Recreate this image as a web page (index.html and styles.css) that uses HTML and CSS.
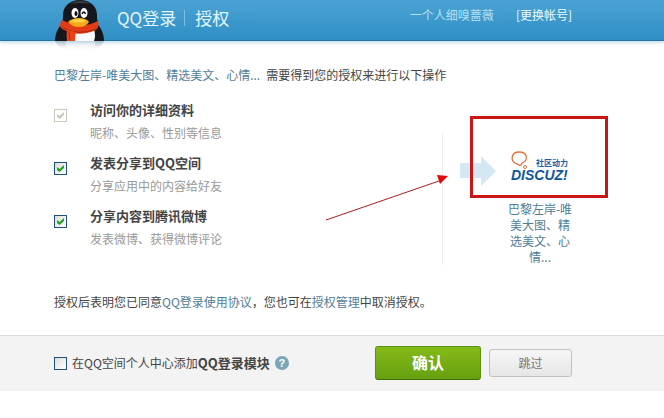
FILE: index.html
```html
<!DOCTYPE html>
<html lang="zh-CN">
<head>
    <meta charset="UTF-8">
    <meta name="viewport" content="width=device-width, initial-scale=1.0">
    <title>QQ登录 | 授权</title>
    <link rel="stylesheet" href="styles.css">
</head>
<body>
    <header class="header">
        <svg class="penguin" viewBox="0 0 52 51" aria-hidden="true">
            <defs>
                <linearGradient id="fade" x1="0" y1="0" x2="0" y2="1">
                    <stop offset="0" stop-color="#7d8b93" stop-opacity=".45"/>
                    <stop offset="1" stop-color="#7d8b93" stop-opacity="0"/>
                </linearGradient>
            </defs>
            <!-- reflection -->
            <path d="M1 41h11v8q-8-1-11-8zM41 41h9q-2 6-9 8z" fill="url(#fade)"/>
            <path d="M12 41h29v9h-29z" fill="url(#fade)" opacity=".35"/>
            <!-- body -->
            <path d="M9 23C4 27 1 34 1 41h49c0-7-3-14-8-18z" fill="#15171c"/>
            <path d="M26 0C15 0 9 7 9 15c0 3 0 5-1 7 3 6 34 6 36 0-1-2-1-4-1-7C43 7 37 0 26 0z" fill="#15171c"/>
            <path d="M16 4Q20 1 27 1q6 0 9 3-9-2-20 0z" fill="#3b3e46"/>
            <path d="M20 31q10 3 20-2 2 7 0 12H20q-1-6 0-10z" fill="#f8fafb"/>
            <!-- eyes -->
            <ellipse cx="21" cy="13" rx="3.5" ry="5" fill="#fff"/>
            <ellipse cx="30" cy="13" rx="3.5" ry="5" fill="#fff"/>
            <ellipse cx="22" cy="13.5" rx="1.5" ry="2.5" fill="#111"/>
            <path d="M28 14q2-4 3.5 0" fill="none" stroke="#111" stroke-width="1.5"/>
            <!-- scarf -->
            <path d="M8 20q-4 5 0 9 16 9 34 1 4-5 2-9-17 9-36-1z" fill="#e23c16"/>
            <path d="M9 28q15 8 33 1" fill="none" stroke="#a92610" stroke-width="1"/>
            <path d="M13 30l9 2q-1 5-1 9h-8q-1-6 0-11z" fill="#e9431a"/>
            <path d="M15 32l1 8" stroke="#b92d10" stroke-width="1"/>
            <!-- beak -->
            <path d="M14 22q4-4 11-4 7 0 10 4-3 5-10 5-7 0-11-5z" fill="#f5a81c"/>
            <path d="M17 21q9-4 15 0-7 3-15 0z" fill="#ffd34a"/>
        </svg>
        <h1 class="title"><span>QQ登录</span><span class="title-sub">授权</span></h1>
        <div class="account">
            <span>一个人细嗅蔷薇</span>
            <a class="switch" href="#">[更换帐号]</a>
        </div>
    </header>

    <form>
        <main class="main">
            <p class="intro"><a href="#">巴黎左岸-唯美大图、精选美文、心情...</a><span>需要得到您的授权来进行以下操作</span></p>

            <div class="content">
                <ul class="scopes">
                    <li class="scope">
                        <input class="check" type="checkbox" id="info" checked disabled>
                        <label for="info"><b>访问你的详细资料</b><span>昵称、头像、性别等信息</span></label>
                    </li>
                    <li class="scope">
                        <input class="check" type="checkbox" id="qzone" checked>
                        <label for="qzone"><b>发表分享到QQ空间</b><span>分享应用中的内容给好友</span></label>
                    </li>
                    <li class="scope">
                        <input class="check" type="checkbox" id="weibo" checked>
                        <label for="weibo"><b>分享内容到腾讯微博</b><span>发表微博、获得微博评论</span></label>
                    </li>
                </ul>

                <div class="target">
                    <svg class="arrow" viewBox="0 0 36 30" aria-hidden="true">
                        <path d="M0 7h21V0l15 15-15 15v-8H0z" fill="#d3e7f5"/>
                    </svg>
                    <div class="app">
                        <svg class="app-logo" viewBox="0 0 66 34" role="img" aria-label="Discuz!">
                            <path d="M9 12.5C3 10 4 1 12 1c9 0 9 8 4 10.500-2 1-1 3-3 3-2 0-2-1.500-4-2z" fill="none" stroke="#e0733a" stroke-width="1.300"/>
                            <circle cx="18" cy="16" r="1.500" fill="none" stroke="#e0733a"/>
                            <text class="logo-cn" x="29" y="15">社区动力</text>
                            <text class="logo-en" x="4" y="29">DISCUZ!</text>
                        </svg>
                        <a class="app-name" href="#">巴黎左岸-唯美大图、精选美文、心情...</a>
                    </div>
                    <div class="mark"></div>
                    <svg class="pointer" viewBox="0 0 124 48" aria-hidden="true">
                        <path d="M1 46L114 7" stroke="#a81c1c" stroke-width="1"/>
                        <path d="M112 1l11 1-8 8z" fill="#e00b0b"/>
                    </svg>
                </div>
            </div>

            <p class="note">授权后表明您已同意<a href="#">QQ登录使用协议</a>，您也可在<a href="#">授权管理</a>中取消授权。</p>
        </main>

        <footer class="footer">
            <div class="module">
                <input class="check" type="checkbox" id="module">
                <label for="module">在QQ空间个人中心添加<b>QQ登录模块</b></label>
                <a class="help" href="#" aria-label="帮助">?</a>
            </div>
            <div class="buttons">
                <button class="btn btn-ok" type="submit">确认</button>
                <button class="btn btn-skip" type="button">跳过</button>
            </div>
        </footer>
    </form>
</body>
</html>
```
FILE: styles.css
```css
* {
    box-sizing: border-box;
}
body {
    margin: 0;
    background: #fff;
    color: #444;
    font: 12px/18px "Noto Sans CJK SC", sans-serif;
}
a {
    color: #4f7d99;
    text-decoration: none;
}
p, ul {
    margin: 0;
    padding: 0;
    list-style: none;
}

/* header */
.header {
    display: flex;
    height: 41px;
    padding: 0 92px 0 54px;
    background: linear-gradient(#4ba3d3, #2f8fc5);
    border-bottom: 1px solid #2474a3;
    box-shadow: 0 2px 3px #c4e3f1;
}
.penguin {
    width: 52px;
    height: 51px;
    flex: none;
}
.title {
    display: flex;
    align-items: center;
    height: 36px;
    margin: 0 auto 0 11px;
    color: #e4f5fd;
    font-size: 17px;
    font-weight: normal;
    line-height: 16px;
}
.title-sub {
    margin-left: 8px;
    padding-left: 10px;
    border-left: 1px solid #7fc0e2;
}
.account {
    display: flex;
    gap: 22px;
    padding-top: 6px;
    color: #b5e0f5;
}
.switch {
    color: #eefaff;
}

/* main */
.main {
    padding: 25px 54px 24px;
}
.intro {
    display: flex;
    flex-wrap: wrap;
    gap: 6px;
}
.content {
    display: grid;
    grid-template-columns: 388px 1fr;
    margin: 16px 0 28px;
}
.scopes {
    display: grid;
    gap: 7px;
    align-content: start;
}
.scope {
    display: flex;
    align-items: flex-start;
    gap: 23px;
}
.scope .check {
    margin-top: 9px;
}
.scope b,
.scope span {
    display: block;
    line-height: 20px;
}
.scope span {
    color: #999;
    line-height: 26px;
}
b {
    font-size: 13px;
}
.check {
    appearance: none;
    flex: none;
    width: 13px;
    height: 13px;
    margin: 0;
    border: 1px solid #1f5080;
    background: linear-gradient(135deg, #dcdcd7, #fff);
}
.check:checked::before {
    content: "";
    display: block;
    width: 7px;
    height: 7px;
    margin: 2px;
    background: #21a121;
    clip-path: polygon(0 29%, 0 71%, 36% 100%, 100% 43%, 100% 0, 36% 57%);
}
.check:disabled {
    border-color: #cac8bb;
    background: #fff;
}
.check:disabled::before {
    background: #cac8bb;
}

.target {
    position: relative;
    display: flex;
    align-items: flex-start;
    gap: 11px;
    margin-top: 33px;
    padding: 18px 0 0 17px;
    border-left: 1px solid #eee;
}
.arrow {
    width: 36px;
    height: 30px;
    margin-top: 5px;
}
.app {
    width: 66px;
    text-align: center;
}
.app-logo {
    display: block;
    width: 66px;
    height: 34px;
    margin-bottom: 16px;
}
.logo-cn {
    fill: #1a62a5;
    font-size: 8px;
    font-weight: bold;
}
.logo-en {
    fill: #0e56a0;
    font: italic bold 14px "Liberation Sans", sans-serif;
}
.app-name {
    display: block;
    line-height: 16px;
}

/* red marks over the app logo */
.mark {
    position: absolute;
    top: -17px;
    left: 27px;
    width: 138px;
    height: 82px;
    border: 3px solid #cb1414;
}
.pointer {
    position: absolute;
    top: 41px;
    left: -118px;
    width: 124px;
    height: 48px;
}

/* footer */
.footer {
    display: flex;
    flex-wrap: wrap;
    align-items: center;
    justify-content: space-between;
    padding: 10px 92px 11px 54px;
    background: #f3f3f3;
    border-top: 1px solid #dcdcdc;
}
.module,
.buttons {
    display: flex;
    align-items: center;
}
.module {
    gap: 5px;
}
.buttons {
    gap: 8px;
}
.help {
    width: 14px;
    height: 14px;
    border-radius: 50%;
    background: #7ba6b8;
    color: #fff;
    font: bold 11px/14px "Liberation Sans", sans-serif;
    text-align: center;
}
.btn {
    padding: 0 0 2px;
    border-radius: 3px;
    font-family: inherit;
}
.btn-ok {
    width: 106px;
    height: 34px;
    border: 1px solid #5c9410;
    border-bottom-color: #41720a;
    background: linear-gradient(#86ba18, #65a00f);
    color: #fff;
    font-size: 16px;
    font-weight: bold;
}
.btn-skip {
    width: 83px;
    height: 28px;
    border: 1px solid #c1c1c1;
    background: linear-gradient(#f6f6f6, #e6e6e6);
    color: #777;
    font-size: 12px;
}
```
